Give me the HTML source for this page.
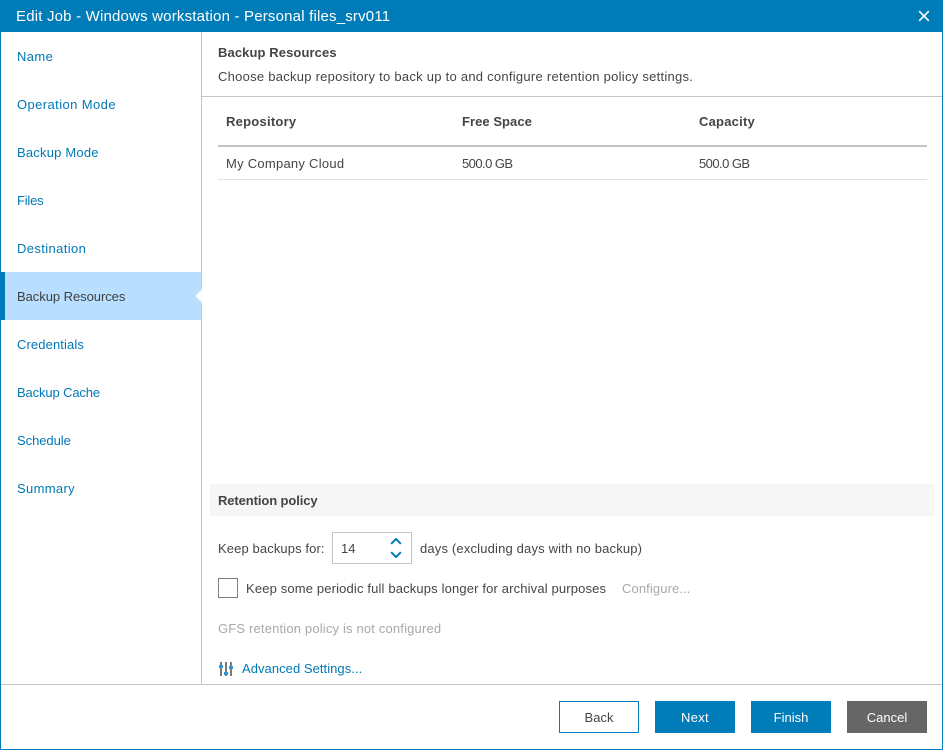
<!DOCTYPE html>
<html lang="en">
<head>
<meta charset="utf-8">
<title>Edit Job</title>
<style>
html,body{margin:0;padding:0;background:#fff}
#p{position:relative;width:943px;height:750px;overflow:hidden;background:#fff;font-family:"Liberation Sans",sans-serif;font-size:13px;color:#454545}
#p div{position:absolute}
.t{white-space:nowrap;line-height:16px;height:16px}
.n{left:17px;color:#0079b6}
.b{font-weight:bold}
.btn{top:701px;width:80px;height:32px;line-height:33px;text-align:center;box-sizing:border-box;color:#fff}
</style>
</head>
<body>
<div id="p">
  <div style="left:0;top:0;width:943px;height:32px;background:#007cb8"></div>
  <div class="t" style="left:16px;top:9px;color:#fff;font-size:15px;letter-spacing:.19px">Edit Job - Windows workstation - Personal files_srv011</div>
  <svg style="position:absolute;left:918px;top:10px" width="12" height="12" viewBox="0 0 12 12"><path d="M1.2 1.2L10.8 10.8M10.8 1.2L1.2 10.8" stroke="#fff" stroke-width="1.7" fill="none"/></svg>

  <div style="left:0;top:32px;width:1px;height:718px;background:#007cb8"></div>
  <div style="left:942px;top:32px;width:1px;height:718px;background:#007cb8"></div>
  <div style="left:0;top:749px;width:943px;height:1px;background:#007cb8"></div>

  <div style="left:201px;top:32px;width:1px;height:652px;background:#c4c4c4"></div>
  <div style="left:1px;top:272px;width:200px;height:48px;background:#b8dfff"></div>
  <div style="left:1px;top:272px;width:4px;height:48px;background:#007cb8"></div>
  <svg style="position:absolute;left:194px;top:288px" width="8" height="16" viewBox="0 0 8 16"><path d="M8 1L1 8L8 15Z" fill="#fff" stroke="#dce8f0" stroke-width="1"/></svg>

  <div class="t n" style="top:49px;letter-spacing:.4px">Name</div>
  <div class="t n" style="top:97px;letter-spacing:.41px">Operation Mode</div>
  <div class="t n" style="top:145px;letter-spacing:.2px">Backup Mode</div>
  <div class="t n" style="top:193px;letter-spacing:-.2px">Files</div>
  <div class="t n" style="top:241px;letter-spacing:.38px">Destination</div>
  <div class="t n" style="top:289px;color:#404040;letter-spacing:-.05px">Backup Resources</div>
  <div class="t n" style="top:337px;letter-spacing:.11px">Credentials</div>
  <div class="t n" style="top:385px;letter-spacing:-.13px">Backup Cache</div>
  <div class="t n" style="top:433px;letter-spacing:-.05px">Schedule</div>
  <div class="t n" style="top:481px;letter-spacing:.34px">Summary</div>

  <div class="t b" style="left:218px;top:45px;letter-spacing:.1px">Backup Resources</div>
  <div class="t" style="left:218px;top:69px;letter-spacing:.26px">Choose backup repository to back up to and configure retention policy settings.</div>
  <div style="left:202px;top:96px;width:740px;height:1px;background:#c4c4c4"></div>

  <div class="t b" style="left:226px;top:114px;letter-spacing:.25px">Repository</div>
  <div class="t b" style="left:462px;top:114px;letter-spacing:.05px">Free Space</div>
  <div class="t b" style="left:699px;top:114px;letter-spacing:.22px">Capacity</div>
  <div style="left:218px;top:145px;width:709px;height:2px;background:#c4c4c4"></div>
  <div class="t" style="left:226px;top:156px;letter-spacing:.26px">My Company Cloud</div>
  <div class="t" style="left:462px;top:156px;letter-spacing:-.55px">500.0 GB</div>
  <div class="t" style="left:699px;top:156px;letter-spacing:-.55px">500.0 GB</div>
  <div style="left:218px;top:179px;width:709px;height:1px;background:#e0e0e0"></div>

  <div style="left:210px;top:484px;width:725px;height:32px;background:#f6f6f6"></div>
  <div class="t b" style="left:218px;top:493px;letter-spacing:-.1px">Retention policy</div>

  <div class="t" style="left:218px;top:541px;letter-spacing:.11px">Keep backups for:</div>
  <div style="left:332px;top:532px;width:80px;height:32px;box-sizing:border-box;border:1px solid #c4c4c4"></div>
  <div class="t" style="left:341px;top:541px">14</div>
  <svg style="position:absolute;left:390px;top:536px" width="12" height="24" viewBox="0 0 12 24"><path d="M1.2 7.8L6 3L10.8 7.8M1.2 16.2L6 21L10.8 16.2" stroke="#007cb8" stroke-width="2" fill="none"/></svg>
  <div class="t" style="left:420px;top:541px;letter-spacing:.17px">days (excluding days with no backup)</div>

  <div style="left:218px;top:578px;width:20px;height:20px;box-sizing:border-box;border:1px solid #808080"></div>
  <div class="t" style="left:246px;top:581px;letter-spacing:.15px">Keep some periodic full backups longer for archival purposes</div>
  <div class="t" style="left:622px;top:581px;color:#a8a8a8;letter-spacing:.11px">Configure...</div>
  <div class="t" style="left:218px;top:621px;color:#a8a8a8;letter-spacing:.17px">GFS retention policy is not configured</div>

  <svg style="position:absolute;left:219px;top:661px" width="15" height="16" viewBox="0 0 15 16">
    <rect x="1" y="1" width="2" height="14" fill="#7a7a7a"/>
    <rect x="6" y="1" width="2" height="14" fill="#7a7a7a"/>
    <rect x="11" y="1" width="2" height="14" fill="#7a7a7a"/>
    <rect x="0" y="4" width="4" height="3" fill="#2c97d4"/>
    <rect x="5" y="11" width="4" height="3" fill="#2c97d4"/>
    <rect x="10" y="5" width="4" height="3" fill="#2c97d4"/>
  </svg>
  <div class="t" style="left:242px;top:661px;color:#0079b6;letter-spacing:.05px">Advanced Settings...</div>

  <div style="left:1px;top:684px;width:941px;height:1px;background:#c4c4c4"></div>

  <div class="btn" style="left:559px;border:1px solid #007cb8;color:#454545;line-height:31px">Back</div>
  <div class="btn" style="left:655px;background:#007cb8;letter-spacing:.3px">Next</div>
  <div class="btn" style="left:751px;background:#007cb8">Finish</div>
  <div class="btn" style="left:847px;background:#666">Cancel</div>
</div>
</body>
</html>
